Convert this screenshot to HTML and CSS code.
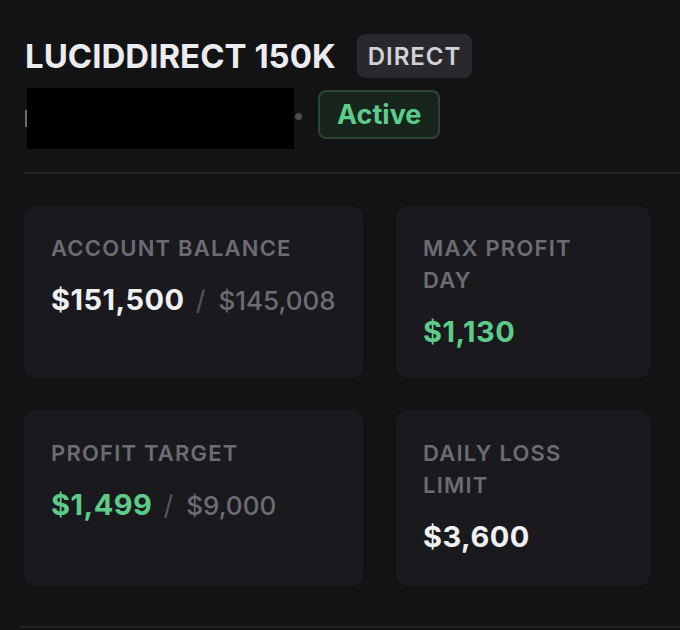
FILE: index.html
```html
<!DOCTYPE html>
<html>
<head>
<meta charset="utf-8">
<link rel="stylesheet" href="styles.css">
</head>
<body>
<div class="page">
  <header class="head">
    <div class="title-row">
      <h1 class="title">LUCIDDIRECT 150K</h1>
      <span class="tag">DIRECT</span>
    </div>
    <div class="sub-row">
      <span class="sliver"></span>
      <span class="redact"></span>
      <span class="dot"></span>
      <span class="status">Active</span>
    </div>
  </header>
  <div class="divider"></div>
  <section class="grid">
    <div class="card">
      <div class="label">ACCOUNT BALANCE</div>
      <div class="value"><span class="main">$151,500</span><span class="sep">/</span><span class="of">$145,008</span></div>
    </div>
    <div class="card">
      <div class="label">MAX PROFIT DAY</div>
      <div class="value"><span class="main green">$1,130</span></div>
    </div>
    <div class="card tall">
      <div class="label">PROFIT TARGET</div>
      <div class="value"><span class="main green">$1,499</span><span class="sep">/</span><span class="of">$9,000</span></div>
    </div>
    <div class="card tall">
      <div class="label">DAILY LOSS LIMIT</div>
      <div class="value"><span class="main">$3,600</span></div>
    </div>
  </section>
  <div class="divider bottom"></div>
</div>
</body>
</html>
```
FILE: styles.css
```css
* { box-sizing: border-box; }
html, body { margin: 0; padding: 0; }
body {
  background: #131316;
  font-family: Inter, "Noto Sans", "Liberation Sans", sans-serif;
  color: #ececf0;
  width: 680px;
  height: 630px;
  overflow: hidden;
}
.page {
  padding: 34px 0 0 24px;
}
.title-row {
  display: flex;
  align-items: center;
  gap: 21px;
  height: 44px;
}
.title {
  margin: 0;
  font-size: 33px;
  font-weight: 700;
  color: #ececf0;
  letter-spacing: 0;
  line-height: 44px;
  padding-left: 1px;
}
.tag {
  height: 44px;
  padding: 0 11px;
  display: flex;
  align-items: center;
  background: #29292d;
  border-radius: 8px;
  color: #d2d2d6;
  font-size: 24px;
  font-weight: 600;
  letter-spacing: 1px;
}
.sub-row {
  display: flex;
  align-items: center;
  margin-top: 10px;
  height: 61px;
}
.sliver {
  width: 2px;
  height: 17px;
  background: #6a6a70;
  margin-left: 1px;
}
.redact {
  width: 267px;
  height: 61px;
  background: #000;
}
.dot {
  width: 7px;
  height: 7px;
  border-radius: 50%;
  background: #4b4b50;
  margin-left: 1px;
  margin-top: -4px;
}
.status {
  margin-left: 16px;
  height: 49px;
  padding: 0 17px;
  display: flex;
  align-items: center;
  background: #17251d;
  border: 2px solid #2a4634;
  border-radius: 8px;
  color: #5ecc89;
  font-size: 27px;
  font-weight: 700;
  margin-top: -8px;
}
.divider {
  height: 2px;
  background: #222226;
  margin-top: 23px;
}
.grid {
  display: grid;
  grid-template-columns: 339px 254px;
  column-gap: 33px;
  row-gap: 32px;
  margin-top: 32px;
}
.card {
  background: #1a1a1e;
  border-radius: 12px;
  padding: 26px 27px 28px;
  min-height: 172px;
}
.card.tall {
  min-height: 176px;
  padding-top: 27px;
}
.label {
  font-size: 22px;
  font-weight: 600;
  line-height: 32px;
  letter-spacing: 1.2px;
  color: #6c6c72;
}
.value {
  margin-top: 19px;
  display: flex;
  align-items: baseline;
  line-height: 34px;
}
.main {
  font-size: 29px;
  font-weight: 700;
  letter-spacing: 0.5px;
  color: #f0f0f3;
}
.main.green { color: #5ecc89; }
.sep {
  font-size: 27px;
  color: #55555a;
  margin: 0 13px 0 11px;
}
.of {
  font-size: 26px;
  font-weight: 500;
  color: #6c6c72;
}
.divider.bottom {
  margin-top: 40px;
  margin-left: -4px;
}
```
